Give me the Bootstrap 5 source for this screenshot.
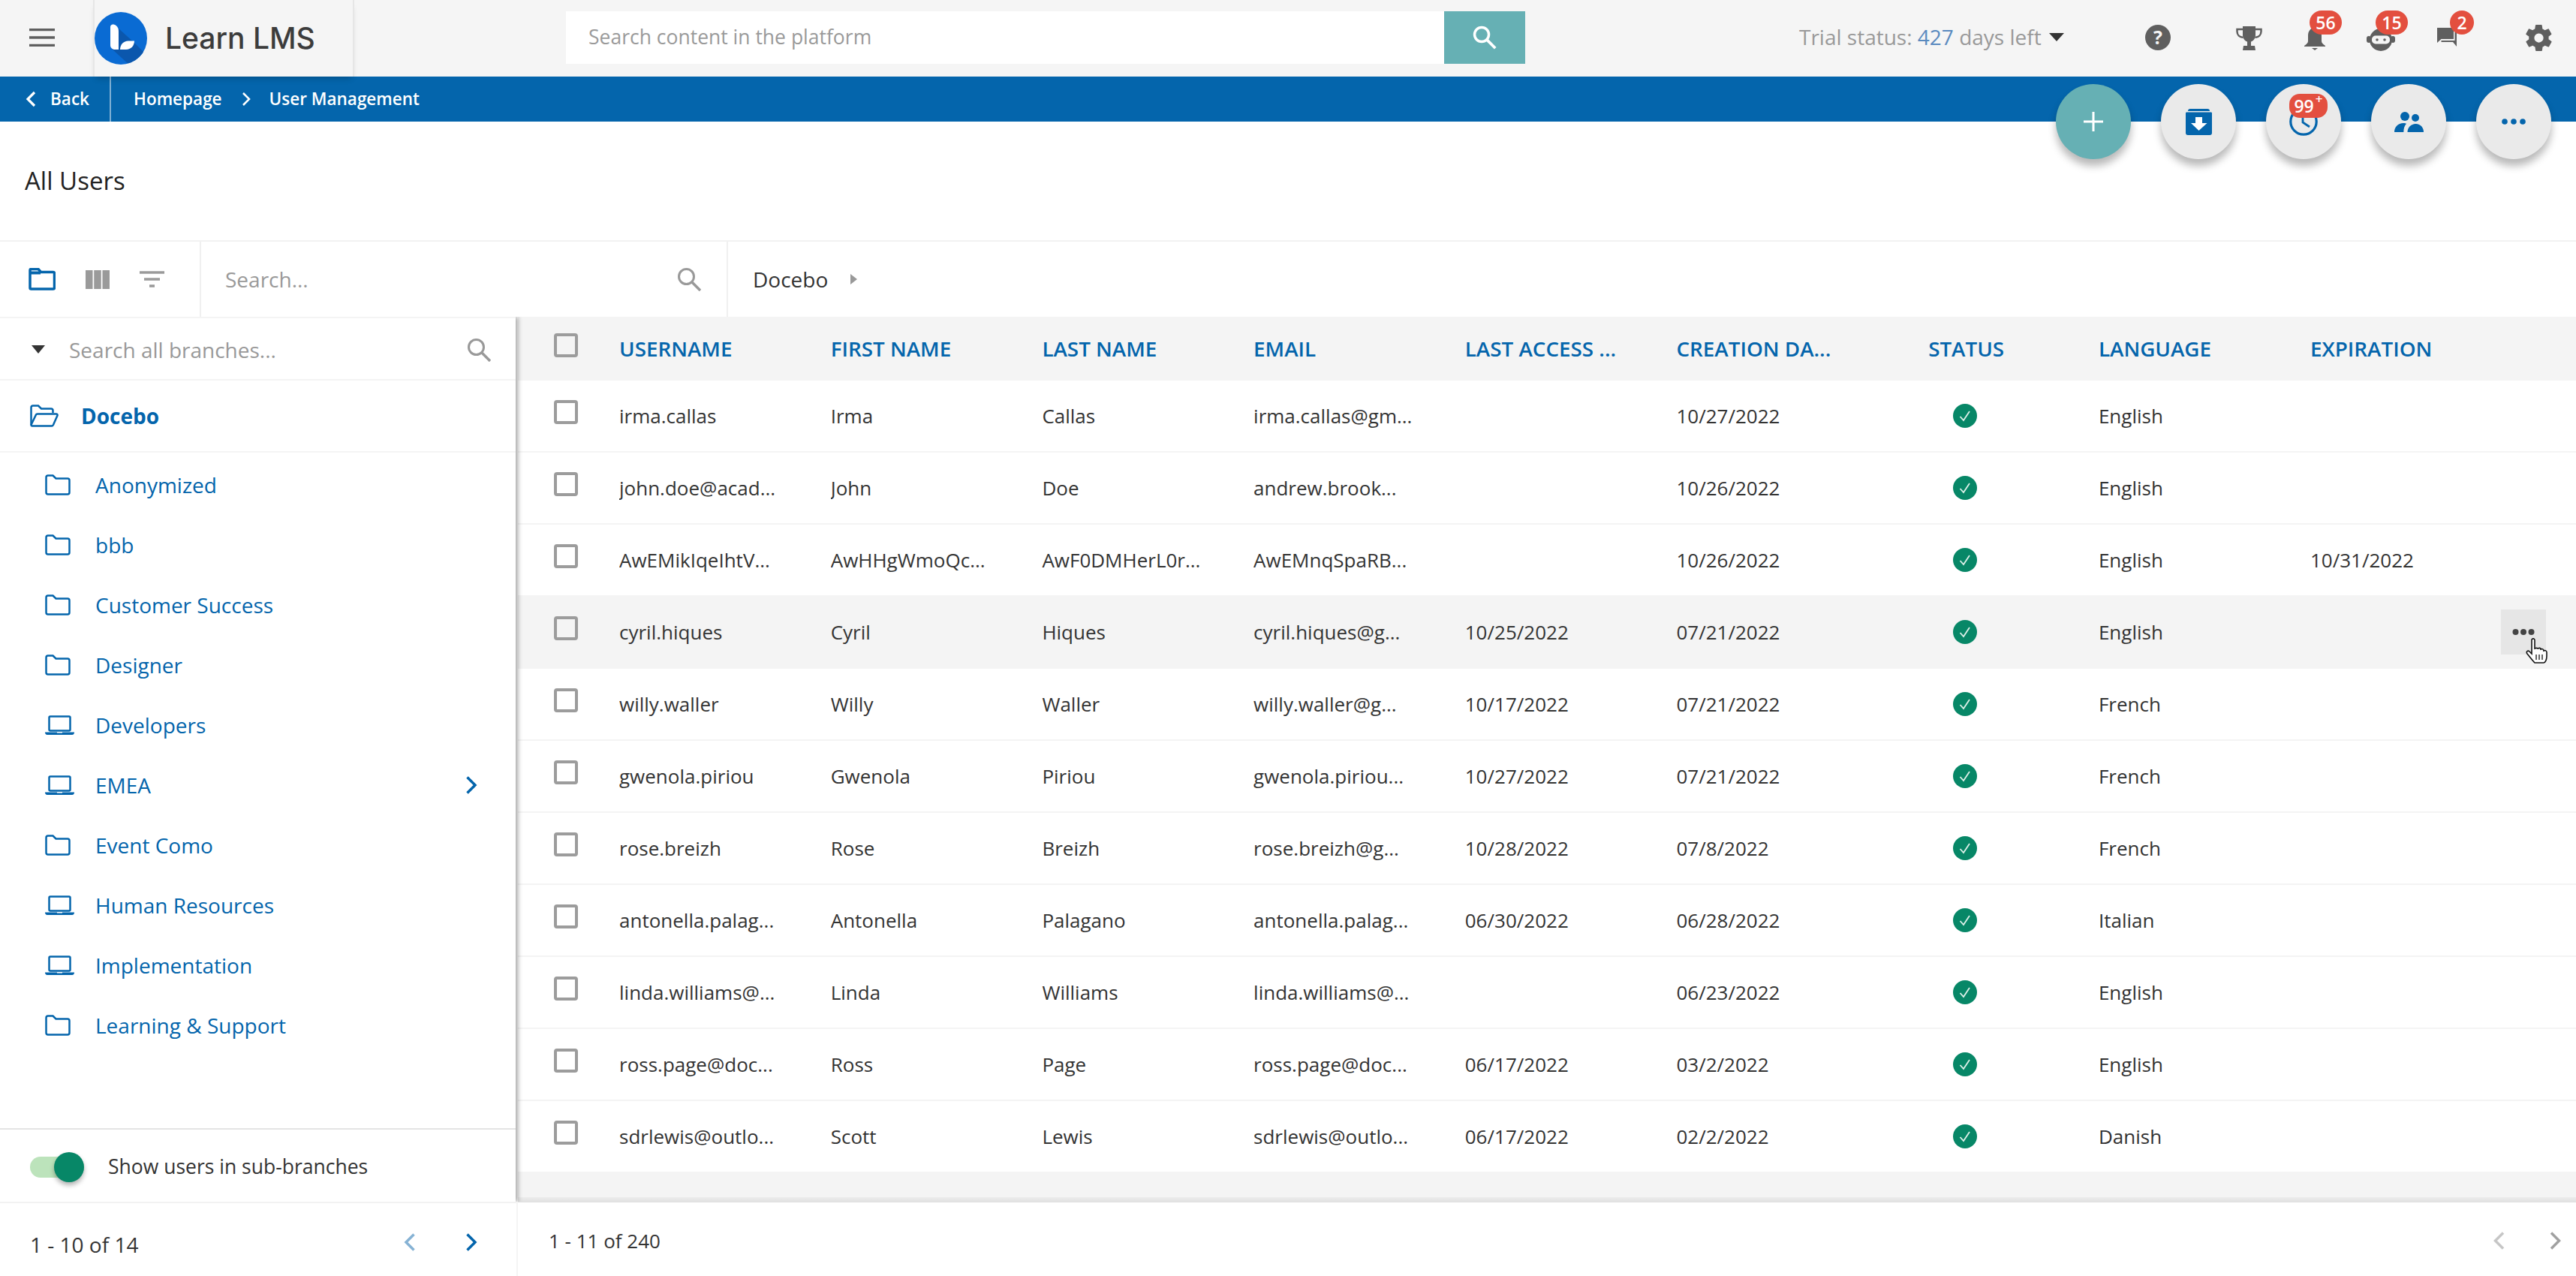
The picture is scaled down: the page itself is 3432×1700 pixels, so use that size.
<!DOCTYPE html>
<html lang="en">
<head>
<meta charset="utf-8">
<title>All Users</title>
<link rel="stylesheet" href="https://cdn.jsdelivr.net/npm/bootstrap@5.3.0/dist/css/bootstrap.min.css">
<style>
:root{--lms-blue:#0465ac;--lms-grey:#f4f4f4;--lms-text:#333;--lms-mute:#999;--lms-red:#e34f3f;}
html,body{height:1700px;overflow:hidden;}
body{font-family:"Open Sans","Noto Sans",sans-serif;font-size:28px;color:var(--lms-text);background:#fff;}
.lms-page{position:relative;width:3432px;height:1700px;overflow:hidden;}
.lms-sprite{position:absolute;width:0;height:0;}
.lms-topbar{height:102px;background:#f5f5f5;}
.lms-burger{width:124px;padding-left:39px;margin-bottom:2px;}
.lms-burger svg{display:block;}
.lms-brand{width:348px;height:102px;border-left:2px solid #e6e6e6;border-right:2px solid #e6e6e6;box-shadow:0 6px 8px -4px rgba(0,0,0,.22);position:relative;z-index:3;gap:24px;font-family:Inter,"Open Sans",sans-serif;font-size:39px;color:#3c3c3c;font-weight:500;background:#f5f5f5;}
.lms-search-top{margin-left:282px;width:1278px;height:70px;margin-bottom:2px;}
.lms-search-top .lms-field{flex:1;background:#fff;padding-left:30px;color:#9a9a9a;font-size:26.5px;}
.lms-search-btn{width:108px;background:#66b0b4;}
.lms-trial{margin-left:365px;width:355px;color:#999;font-size:28px;white-space:nowrap;margin-bottom:4px;}
.lms-trial b{font-weight:400;color:#5a8abf;}
.lms-caret{width:0;height:0;border-left:10px solid transparent;border-right:10px solid transparent;border-top:11px solid #333;margin-left:10px;}
.lms-topicons{flex:1;}
.lms-ti{position:relative;flex:none;}
.lms-ti svg{display:block;}
.t-help{margin:33px 0 0 106px;}
.t-cup{margin:35px 0 0 87px;}
.t-bell{margin:37px 0 0 56px;}
.t-robot{margin:38px 0 0 55px;}
.t-chat{margin:37px 0 0 56px;}
.t-gear{margin:33px 0 0 92px;}
.lms-pill{position:absolute;background:var(--lms-red);color:#fff;border-radius:16px;font-size:23px;font-weight:600;height:32px;display:flex;align-items:center;justify-content:center;line-height:1;}
.pill-56{left:7px;top:-23px;width:43px;}
.pill-15{left:12px;top:-24px;width:43px;}
.pill-2{left:17px;top:-23px;width:32px;}
.pill-99{left:31px;top:13px;width:51px;border-radius:14px;}
.pill-99 sup{font-size:17px;top:-.55em;margin-left:2px;}
.lms-crumbs{height:60px;background:var(--lms-blue);color:#fff;font-size:22.5px;font-weight:600;}
.lms-back{width:148px;height:60px;border-right:2px solid #7fb0d4;padding-left:34px;gap:19px;}
.lms-crumbs .lms-home{margin-left:30px;}
.lms-crumbs .lms-sep{margin:0 25px 0 26px;}
.lms-fabs{position:absolute;left:2739px;top:112px;gap:40px;z-index:5;}
.lms-fab{position:relative;width:100px;height:100px;border-radius:50%;background:#eaeaea;box-shadow:0 9px 11px rgba(0,0,0,.28);}
.lms-fab-add{background:#66b0b4;}
.lms-title{height:158px;font-size:33px;font-weight:500;color:#222;padding-left:33px;}
.lms-tools{height:102px;border-top:2px solid #f2f2f2;}
.lms-viewbtns{width:268px;padding-left:38px;gap:40px;border-right:2px solid #f0f0f0;height:100px;}
.lms-toolsearch{width:702px;height:100px;border-right:2px solid #f0f0f0;padding:0 34px 0 32px;color:#999;}
.lms-path{padding-left:33px;gap:30px;color:#333;}
.lms-tri{width:0;height:0;border-top:7px solid transparent;border-bottom:7px solid transparent;border-left:9px solid #999;}
.lms-main{height:1278px;}
.lms-side{width:690px;height:1278px;position:relative;z-index:2;flex:none;}
.lms-side-panel{width:687px;height:1179px;background:#fff;box-shadow:3px 0 6px rgba(0,0,0,.35);clip-path:inset(0 -14px 0 0);}
.lms-sidesearch{height:83px;flex:none;padding:2px 33px 0 42px;color:#999;border-top:2px solid #f4f4f4;}
.lms-tri-down{width:0;height:0;border-left:9px solid transparent;border-right:9px solid transparent;border-top:11px solid #333;margin-right:32px;}
.lms-root{height:98px;flex:none;border-top:2px solid #f4f4f4;border-bottom:2px solid #f4f4f4;padding-left:40px;color:var(--lms-blue);font-weight:700;gap:30px;}
.lms-branch{height:80px;padding-left:60px;color:var(--lms-blue);padding-right:51px;}
.lms-branch .lms-ico{width:67px;flex:none;}
.lms-branches{height:900px;flex:none;padding-top:3px;}
.lms-toggle-row{height:98px;flex:none;border-top:2px solid #e4e4e4;padding:3px 0 0 40px;gap:32px;font-size:26.5px;color:#333;}
.lms-toggle{position:relative;width:72px;height:28px;border-radius:14px;background:#bce3bb;}
.lms-knob{position:absolute;right:0;top:-6px;width:40px;height:40px;border-radius:50%;background:#078767;box-shadow:0 4px 6px rgba(0,0,0,.3);}
.lms-pager{position:relative;width:690px;height:99px;background:#fff;border-top:2px solid #f2f2f2;border-right:2px solid #f4f4f4;padding:6px 52px 0 40px;font-size:28px;}
.lms-pager .lms-count{margin-top:6px;}
.lms-pager .lms-chev-l{margin-right:66px;}
.lms-content{flex:1;height:1278px;min-width:0;}
.lms-head{height:85px;flex:none;background:var(--lms-grey);color:var(--lms-blue);font-weight:600;font-size:27.8px;}
.lms-rows{height:1056px;flex:none;}
.lms-row{height:96px;border-bottom:2px solid var(--lms-grey);font-size:26px;color:#333;}
.lms-row-hover{background:var(--lms-grey);}
.lms-c0{width:135px;padding-left:48px;flex:none;}
.lms-cc{width:281.7px;flex:none;white-space:nowrap;overflow:hidden;padding-right:4px;}
.lms-check{display:block;width:32px;height:32px;border:4px solid #9c9c9c;border-radius:4px;background:transparent;margin-top:-10px;}
.lms-status{padding-left:87px;flex:none;width:280.8px;}
.lms-status svg{display:block;}
.lms-stat-head{flex:none;width:280.8px;padding-left:54px;}
.lms-lang{flex:none;width:282px;}
.lms-actions{position:relative;margin-left:auto;width:60px;height:60px;background:#e6e6e6;margin-right:40px;flex:none;}
.lms-cursor{position:absolute;left:33px;top:38px;}
.lms-greyfill{height:32px;flex:none;background:var(--lms-grey);}
.lms-shadowline{height:7px;flex:none;background:linear-gradient(#ececec,#e0e0e0);}
.lms-foot{height:98px;flex:none;padding:4px 19px 0 41px;font-size:26px;}
.lms-foot .lms-chev-l{margin-right:58px;}
</style>
</head>
<body>
<div class="lms-page">

<svg class="lms-sprite" aria-hidden="true">
  <symbol id="i-folder" viewBox="0 0 34 28"><path d="M1.500 4c0-1.500 1-2.500 2.500-2.500h6.500l4 4H30c1.500 0 2.500 1 2.500 2.500v16c0 1.500-1 2.500-2.500 2.500H4c-1.500 0-2.500-1-2.500-2.500z" fill="none" stroke="#0465ac" stroke-width="2.500"/></symbol>
  <symbol id="i-laptop" viewBox="0 0 39 26"><rect x="5.500" y="1.500" width="28" height="19" rx="1.500" fill="none" stroke="#0465ac" stroke-width="2.500"/><path d="M0 22.500h16v1h7v-1h16c0 2-1 3.500-3 3.500H3c-2 0-3-1.500-3-3.500z" fill="#0465ac"/></symbol>
  <symbol id="i-ok" viewBox="0 0 32 32"><circle cx="16" cy="16" r="16" fill="#078767"/><path d="M9.500 17l4.500 5 8-12" fill="none" stroke="#dff1ea" stroke-width="1.800"/></symbol>
  <symbol id="i-search" viewBox="0 0 32 32"><circle cx="12.500" cy="12.500" r="10" fill="none" stroke="#999" stroke-width="3"/><path d="M20 20l11 11" stroke="#999" stroke-width="3.500"/></symbol>
</svg>

<header class="lms-topbar d-flex align-items-center">
  <div class="lms-burger">
    <svg width="34" height="24" viewBox="0 0 34 24"><path d="M0 1.500h34M0 12h34M0 22.500h34" stroke="#5f5f5f" stroke-width="3.500"/></svg>
  </div>
  <div class="lms-brand d-flex align-items-center">
    <svg width="70" height="70" viewBox="0 0 70 70"><defs><clipPath id="lc"><circle cx="35" cy="35" r="35"/></clipPath></defs><circle cx="35" cy="35" r="35" fill="#0a6bd3"/><path clip-path="url(#lc)" d="M32 22 L53 41 L72 60 L72 72 L48 72 L24 50Z" fill="#0b57ad"/><path d="M21 20c0-2.500 2-4 4.500-3.500 3.500.8 6.500 4 6.500 9V50h-5c-3.500 0-6-2.500-6-6z" fill="#fff"/><path d="M34 50c0-6.500 4.500-11.500 11-11.500h8c0 6.500-4.500 11.500-11 11.500z" fill="#fff"/></svg>
    <span>Learn LMS</span>
  </div>
  <div class="lms-search-top d-flex">
    <div class="lms-field d-flex align-items-center">Search content in the platform</div>
    <div class="lms-search-btn d-flex align-items-center justify-content-center">
      <svg width="38" height="38" viewBox="0 0 24 24"><circle cx="9.500" cy="9.500" r="6" fill="none" stroke="#fff" stroke-width="2.200"/><path d="M14 14l7 7" stroke="#fff" stroke-width="2.400"/></svg>
    </div>
  </div>
  <div class="lms-trial d-flex align-items-center"><span>Trial status: <b>427</b> days left</span><i class="lms-caret"></i></div>
  <div class="lms-topicons h-100 d-flex align-items-start">
    <div class="lms-ti t-help"><svg width="34" height="34" viewBox="0 0 34 34"><circle cx="17" cy="17" r="17" fill="#5f5f5f"/><text x="17" y="25.500" text-anchor="middle" fill="#f5f5f5" font-family="Open Sans" font-weight="700" font-size="25">?</text></svg></div>
    <div class="lms-ti t-cup"><svg width="35" height="32" viewBox="0 0 35 32"><path d="M9 0h17v12c0 5-4 8-6 8.500V26h5l1 6H9l1-6h5v-5.500C13 20 9 17 9 12z" fill="#5f5f5f"/><path d="M9 4H1.500v3c0 4 3 7.500 8 8M26 4h7.500v3c0 4-3 7.500-8 8" fill="none" stroke="#5f5f5f" stroke-width="2.500"/></svg></div>
    <div class="lms-ti t-bell"><svg width="28" height="30" viewBox="0 0 28 30"><path d="M14 0c6 0 9 5 9 10v8c0 2 2 4 5 6v1H0v-1c3-2 5-4 5-6v-8C5 5 8 0 14 0z" fill="#5f5f5f"/><path d="M10 27h8l-4 3z" fill="#5f5f5f"/></svg><span class="lms-pill pill-56">56</span></div>
    <div class="lms-ti t-robot"><svg width="38" height="30" viewBox="0 0 38 30"><rect x="0" y="10" width="6" height="9" rx="3" fill="#5f5f5f"/><rect x="32" y="10" width="6" height="9" rx="3" fill="#5f5f5f"/><circle cx="19" cy="15" r="15" fill="#5f5f5f"/><rect x="7" y="9.500" width="24" height="11" rx="5" fill="#f5f5f5"/><circle cx="14" cy="15" r="1.800" fill="#5f5f5f"/><circle cx="24" cy="15" r="1.800" fill="#5f5f5f"/></svg><span class="lms-pill pill-15">15</span></div>
    <div class="lms-ti t-chat"><svg width="26" height="25" viewBox="0 0 26 25"><path d="M0 0h22v15H5.500L0 20z" fill="#5f5f5f"/><path d="M23.500 6H26v19l-5-6H5.500v-2h18z" fill="#5f5f5f"/></svg><span class="lms-pill pill-2">2</span></div>
    <div class="lms-ti t-gear"><svg width="35" height="35" viewBox="2 2 20 20"><path fill="#5f5f5f" fill-rule="evenodd" d="M19.400 13c.1-.3.1-.7.1-1s0-.7-.1-1l2.100-1.600c.2-.2.2-.4.1-.6l-2-3.500c-.1-.2-.4-.3-.6-.2l-2.500 1c-.5-.4-1.100-.7-1.700-1l-.4-2.700c0-.2-.2-.4-.5-.4h-4c-.2 0-.4.2-.5.4l-.4 2.700c-.6.2-1.100.6-1.700 1l-2.500-1c-.2-.1-.5 0-.6.2l-2 3.500c-.1.2 0 .5.1.6L4.500 11c0 .3-.1.7-.1 1s0 .7.1 1l-2.100 1.600c-.2.2-.2.4-.1.6l2 3.500c.1.2.4.3.6.2l2.500-1c.5.4 1.100.7 1.700 1l.4 2.700c0 .2.2.4.5.4h4c.2 0 .5-.2.5-.4l.4-2.700c.6-.2 1.200-.6 1.700-1l2.500 1c.2.1.5 0 .6-.2l2-3.500c.1-.2.1-.5-.1-.6zM12 15.500a3.500 3.500 0 1 1 0-7 3.500 3.500 0 0 1 0 7z"/></svg></div>
  </div>
</header>

<nav class="lms-crumbs d-flex align-items-center">
  <div class="lms-back d-flex align-items-center">
    <svg width="14" height="22" viewBox="0 0 14 22"><path d="M12 2L3 11l9 9" fill="none" stroke="#fff" stroke-width="3.200"/></svg>
    <span>Back</span>
  </div>
  <span class="lms-home">Homepage</span>
  <svg class="lms-sep" width="12" height="20" viewBox="0 0 12 20"><path d="M2 2l8 8-8 8" fill="none" stroke="#fff" stroke-width="2.500"/></svg>
  <span>User Management</span>
</nav>

<div class="lms-fabs d-flex">
  <div class="lms-fab lms-fab-add d-flex align-items-center justify-content-center">
    <svg width="26" height="26" viewBox="0 0 26 26"><path d="M13 0v26M0 13h26" stroke="#fff" stroke-width="3"/></svg>
  </div>
  <div class="lms-fab d-flex align-items-center justify-content-center">
    <svg width="35" height="35" viewBox="0 0 35 35"><path d="M3 3c0-2 1-3 3-3h23c2 0 3 1 3 3H3z" fill="#0465ac"/><path d="M0 6c0-1 .5-1.500 1.500-1.500h32c1 0 1.500.5 1.500 1.500v26c0 2-1 3-3 3H3c-2 0-3-1-3-3z" fill="#0465ac"/><path d="M13 11h9v8h6.500L17.500 29 7 19h6z" fill="#fff"/></svg>
  </div>
  <div class="lms-fab d-flex align-items-center justify-content-center">
    <svg width="38" height="38" viewBox="0 0 38 38"><circle cx="19" cy="19" r="17.200" fill="none" stroke="#0465ac" stroke-width="3.200"/><path d="M18 9v11l9 6" fill="none" stroke="#0465ac" stroke-width="2.800"/></svg>
    <span class="lms-pill pill-99">99<sup>+</sup></span>
  </div>
  <div class="lms-fab d-flex align-items-center justify-content-center">
    <svg width="39" height="27" viewBox="0 0 39 27"><circle cx="14" cy="6" r="6" fill="#0465ac"/><circle cx="28" cy="8" r="5" fill="#0465ac"/><path d="M0 27c0-7 5-12 12-12 2 0 3 .3 4 .7-2.500 2.500-3.700 6.500-3.700 11.300z" fill="#0465ac"/><path d="M17.500 27c0-6 4.500-11 11-11s10.500 5 10.500 11z" fill="#0465ac"/></svg>
  </div>
  <div class="lms-fab d-flex align-items-center justify-content-center">
    <svg width="32" height="8" viewBox="0 0 32 8"><circle cx="4" cy="4" r="3.800" fill="#0465ac"/><circle cx="16" cy="4" r="3.800" fill="#0465ac"/><circle cx="28" cy="4" r="3.800" fill="#0465ac"/></svg>
  </div>
</div>

<div class="lms-title d-flex align-items-center">All Users</div>

<div class="lms-tools d-flex align-items-center">
  <div class="lms-viewbtns d-flex align-items-center">
    <svg width="36" height="30" viewBox="0 0 36 30"><path d="M2 3c0-1 .5-1.500 1.500-1.500H13l3.500 4H33c1 0 1.500.5 1.500 1.500v19.500c0 1-.5 1.500-1.500 1.500H3.500c-1 0-1.500-.5-1.500-1.500z" fill="none" stroke="#0465ac" stroke-width="3.500"/><path d="M2 6.500h14" stroke="#0465ac" stroke-width="4"/></svg>
    <svg width="32" height="25" viewBox="0 0 32 25"><rect width="9.500" height="25" fill="#9a9a9a"/><rect x="11.250" width="9.500" height="25" fill="#9a9a9a"/><rect x="22.500" width="9.500" height="25" fill="#9a9a9a"/></svg>
    <svg width="33" height="22" viewBox="0 0 33 22"><path d="M0 2h33M6 11h21M13 20h7" stroke="#9a9a9a" stroke-width="3.500"/></svg>
  </div>
  <div class="lms-toolsearch d-flex align-items-center justify-content-between">
    <span>Search...</span>
    <svg width="32" height="32"><use href="#i-search"/></svg>
  </div>
  <div class="lms-path d-flex align-items-center"><span>Docebo</span><i class="lms-tri"></i></div>
</div>

<div class="lms-main d-flex">
  <aside class="lms-side">
    <div class="lms-side-panel d-flex flex-column">
      <div class="lms-sidesearch d-flex align-items-center">
        <i class="lms-tri-down"></i>
        <span class="flex-grow-1">Search all branches...</span>
        <svg width="32" height="32"><use href="#i-search"/></svg>
      </div>
      <div class="lms-root d-flex align-items-center">
        <svg width="38" height="30" viewBox="0 0 38 30"><path d="M1.500 27V4c0-1.500 1-2.500 2.500-2.500h7l4 4h13c1.500 0 2.500 1 2.500 2.500v3" fill="none" stroke="#0465ac" stroke-width="2.500"/><path d="M1.500 27c0 1 .5 1.500 1.500 1.500h26c1 0 1.500-.5 2-1.500l5.500-12.500c.3-1-.2-2-1.500-2H10c-1 0-2 .5-2.300 1.500z" fill="none" stroke="#0465ac" stroke-width="2.500"/></svg>
        <span>Docebo</span>
      </div>
      <ul class="lms-branches list-unstyled mb-0">
        <li class="lms-branch d-flex align-items-center"><span class="lms-ico d-flex"><svg width="34" height="28"><use href="#i-folder"/></svg></span>Anonymized</li>
        <li class="lms-branch d-flex align-items-center"><span class="lms-ico d-flex"><svg width="34" height="28"><use href="#i-folder"/></svg></span>bbb</li>
        <li class="lms-branch d-flex align-items-center"><span class="lms-ico d-flex"><svg width="34" height="28"><use href="#i-folder"/></svg></span>Customer Success</li>
        <li class="lms-branch d-flex align-items-center"><span class="lms-ico d-flex"><svg width="34" height="28"><use href="#i-folder"/></svg></span>Designer</li>
        <li class="lms-branch d-flex align-items-center"><span class="lms-ico d-flex"><svg width="39" height="26"><use href="#i-laptop"/></svg></span>Developers</li>
        <li class="lms-branch d-flex align-items-center"><span class="lms-ico d-flex"><svg width="39" height="26"><use href="#i-laptop"/></svg></span><span class="flex-grow-1">EMEA</span><svg width="16" height="26" viewBox="0 0 16 26"><path d="M2.500 2.500L13 13 2.500 23.500" fill="none" stroke="#0465ac" stroke-width="3.500"/></svg></li>
        <li class="lms-branch d-flex align-items-center"><span class="lms-ico d-flex"><svg width="34" height="28"><use href="#i-folder"/></svg></span>Event Como</li>
        <li class="lms-branch d-flex align-items-center"><span class="lms-ico d-flex"><svg width="39" height="26"><use href="#i-laptop"/></svg></span>Human Resources</li>
        <li class="lms-branch d-flex align-items-center"><span class="lms-ico d-flex"><svg width="39" height="26"><use href="#i-laptop"/></svg></span>Implementation</li>
        <li class="lms-branch d-flex align-items-center"><span class="lms-ico d-flex"><svg width="34" height="28"><use href="#i-folder"/></svg></span>Learning &amp; Support</li>
      </ul>
      <div class="lms-toggle-row d-flex align-items-center">
        <span class="lms-toggle"><span class="lms-knob"></span></span>
        <span>Show users in sub-branches</span>
      </div>
    </div>
    <div class="lms-pager d-flex align-items-center">
      <span class="flex-grow-1 lms-count">1 - 10 of 14</span>
      <svg class="lms-chev-l" width="16" height="26" viewBox="0 0 16 26"><path d="M13.500 2.500L3 13l10.500 10.500" fill="none" stroke="#86b2d4" stroke-width="3.500"/></svg>
      <svg width="16" height="26" viewBox="0 0 16 26"><path d="M2.500 2.500L13 13 2.500 23.500" fill="none" stroke="#0465ac" stroke-width="3.500"/></svg>
    </div>
  </aside>

  <section class="lms-content d-flex flex-column">
    <div class="lms-head d-flex align-items-center">
      <div class="lms-c0"><i class="lms-check"></i></div>
      <div class="lms-cc">USERNAME</div><div class="lms-cc">FIRST NAME</div><div class="lms-cc">LAST NAME</div><div class="lms-cc">EMAIL</div>
      <div class="lms-cc">LAST ACCESS ...</div><div class="lms-cc">CREATION DA...</div>
      <div class="lms-stat-head">STATUS</div><div class="lms-lang">LANGUAGE</div><div class="lms-cc">EXPIRATION</div>
    </div>
    <div class="lms-rows">
      <div class="lms-row d-flex align-items-center"><div class="lms-c0"><i class="lms-check"></i></div><div class="lms-cc">irma.callas</div><div class="lms-cc">Irma</div><div class="lms-cc">Callas</div><div class="lms-cc">irma.callas@gm...</div><div class="lms-cc"></div><div class="lms-cc">10/27/2022</div><div class="lms-status"><svg width="32" height="32"><use href="#i-ok"/></svg></div><div class="lms-lang">English</div><div class="lms-cc"></div></div>
      <div class="lms-row d-flex align-items-center"><div class="lms-c0"><i class="lms-check"></i></div><div class="lms-cc">john.doe@acad...</div><div class="lms-cc">John</div><div class="lms-cc">Doe</div><div class="lms-cc">andrew.brook...</div><div class="lms-cc"></div><div class="lms-cc">10/26/2022</div><div class="lms-status"><svg width="32" height="32"><use href="#i-ok"/></svg></div><div class="lms-lang">English</div><div class="lms-cc"></div></div>
      <div class="lms-row d-flex align-items-center"><div class="lms-c0"><i class="lms-check"></i></div><div class="lms-cc">AwEMikIqeIhtV...</div><div class="lms-cc">AwHHgWmoQc...</div><div class="lms-cc">AwF0DMHerL0r...</div><div class="lms-cc">AwEMnqSpaRB...</div><div class="lms-cc"></div><div class="lms-cc">10/26/2022</div><div class="lms-status"><svg width="32" height="32"><use href="#i-ok"/></svg></div><div class="lms-lang">English</div><div class="lms-cc">10/31/2022</div></div>
      <div class="lms-row lms-row-hover d-flex align-items-center"><div class="lms-c0"><i class="lms-check"></i></div><div class="lms-cc">cyril.hiques</div><div class="lms-cc">Cyril</div><div class="lms-cc">Hiques</div><div class="lms-cc">cyril.hiques@g...</div><div class="lms-cc">10/25/2022</div><div class="lms-cc">07/21/2022</div><div class="lms-status"><svg width="32" height="32"><use href="#i-ok"/></svg></div><div class="lms-lang">English</div><div class="lms-actions d-flex align-items-center justify-content-center"><svg width="30" height="10" viewBox="0 0 30 10"><circle cx="4.500" cy="5" r="4" fill="#444"/><circle cx="15" cy="5" r="4" fill="#444"/><circle cx="25.500" cy="5" r="4" fill="#444"/></svg><svg class="lms-cursor" width="30" height="34" viewBox="0 0 30 34"><path d="M8 2c2-2 4-1 4 1v11c2-1 3-1 4 0 2-1 4-1 4 1 2-1 4 0 4 2 2-1 4 0 4 2v5c0 5-2 9-4 9H12c-2-2-6-7-10-12-2-3 1-5 3-3l3 3z" fill="#fff" stroke="#111" stroke-width="1.600"/><path d="M14 22v7M18 22v7M22 22v7" stroke="#111" stroke-width="1.300"/></svg></div></div>
      <div class="lms-row d-flex align-items-center"><div class="lms-c0"><i class="lms-check"></i></div><div class="lms-cc">willy.waller</div><div class="lms-cc">Willy</div><div class="lms-cc">Waller</div><div class="lms-cc">willy.waller@g...</div><div class="lms-cc">10/17/2022</div><div class="lms-cc">07/21/2022</div><div class="lms-status"><svg width="32" height="32"><use href="#i-ok"/></svg></div><div class="lms-lang">French</div><div class="lms-cc"></div></div>
      <div class="lms-row d-flex align-items-center"><div class="lms-c0"><i class="lms-check"></i></div><div class="lms-cc">gwenola.piriou</div><div class="lms-cc">Gwenola</div><div class="lms-cc">Piriou</div><div class="lms-cc">gwenola.piriou...</div><div class="lms-cc">10/27/2022</div><div class="lms-cc">07/21/2022</div><div class="lms-status"><svg width="32" height="32"><use href="#i-ok"/></svg></div><div class="lms-lang">French</div><div class="lms-cc"></div></div>
      <div class="lms-row d-flex align-items-center"><div class="lms-c0"><i class="lms-check"></i></div><div class="lms-cc">rose.breizh</div><div class="lms-cc">Rose</div><div class="lms-cc">Breizh</div><div class="lms-cc">rose.breizh@g...</div><div class="lms-cc">10/28/2022</div><div class="lms-cc">07/8/2022</div><div class="lms-status"><svg width="32" height="32"><use href="#i-ok"/></svg></div><div class="lms-lang">French</div><div class="lms-cc"></div></div>
      <div class="lms-row d-flex align-items-center"><div class="lms-c0"><i class="lms-check"></i></div><div class="lms-cc">antonella.palag...</div><div class="lms-cc">Antonella</div><div class="lms-cc">Palagano</div><div class="lms-cc">antonella.palag...</div><div class="lms-cc">06/30/2022</div><div class="lms-cc">06/28/2022</div><div class="lms-status"><svg width="32" height="32"><use href="#i-ok"/></svg></div><div class="lms-lang">Italian</div><div class="lms-cc"></div></div>
      <div class="lms-row d-flex align-items-center"><div class="lms-c0"><i class="lms-check"></i></div><div class="lms-cc">linda.williams@...</div><div class="lms-cc">Linda</div><div class="lms-cc">Williams</div><div class="lms-cc">linda.williams@...</div><div class="lms-cc"></div><div class="lms-cc">06/23/2022</div><div class="lms-status"><svg width="32" height="32"><use href="#i-ok"/></svg></div><div class="lms-lang">English</div><div class="lms-cc"></div></div>
      <div class="lms-row d-flex align-items-center"><div class="lms-c0"><i class="lms-check"></i></div><div class="lms-cc">ross.page@doc...</div><div class="lms-cc">Ross</div><div class="lms-cc">Page</div><div class="lms-cc">ross.page@doc...</div><div class="lms-cc">06/17/2022</div><div class="lms-cc">03/2/2022</div><div class="lms-status"><svg width="32" height="32"><use href="#i-ok"/></svg></div><div class="lms-lang">English</div><div class="lms-cc"></div></div>
      <div class="lms-row d-flex align-items-center"><div class="lms-c0"><i class="lms-check"></i></div><div class="lms-cc">sdrlewis@outlo...</div><div class="lms-cc">Scott</div><div class="lms-cc">Lewis</div><div class="lms-cc">sdrlewis@outlo...</div><div class="lms-cc">06/17/2022</div><div class="lms-cc">02/2/2022</div><div class="lms-status"><svg width="32" height="32"><use href="#i-ok"/></svg></div><div class="lms-lang">Danish</div><div class="lms-cc"></div></div>
    </div>
    <div class="lms-greyfill"></div>
    <div class="lms-shadowline"></div>
    <div class="lms-foot d-flex align-items-center">
      <span class="flex-grow-1">1 - 11 of 240</span>
      <svg class="lms-chev-l" width="17" height="26" viewBox="0 0 16 26"><path d="M13.500 2.500L3 13l10.500 10.500" fill="none" stroke="#c6c6c6" stroke-width="3.500"/></svg>
      <svg width="17" height="26" viewBox="0 0 16 26"><path d="M2.500 2.500L13 13 2.500 23.500" fill="none" stroke="#a0a0a0" stroke-width="3.500"/></svg>
    </div>
  </section>
</div>
</div>
<script src="https://cdn.jsdelivr.net/npm/bootstrap@5.3.0/dist/js/bootstrap.bundle.min.js"></script>
</body>
</html>
